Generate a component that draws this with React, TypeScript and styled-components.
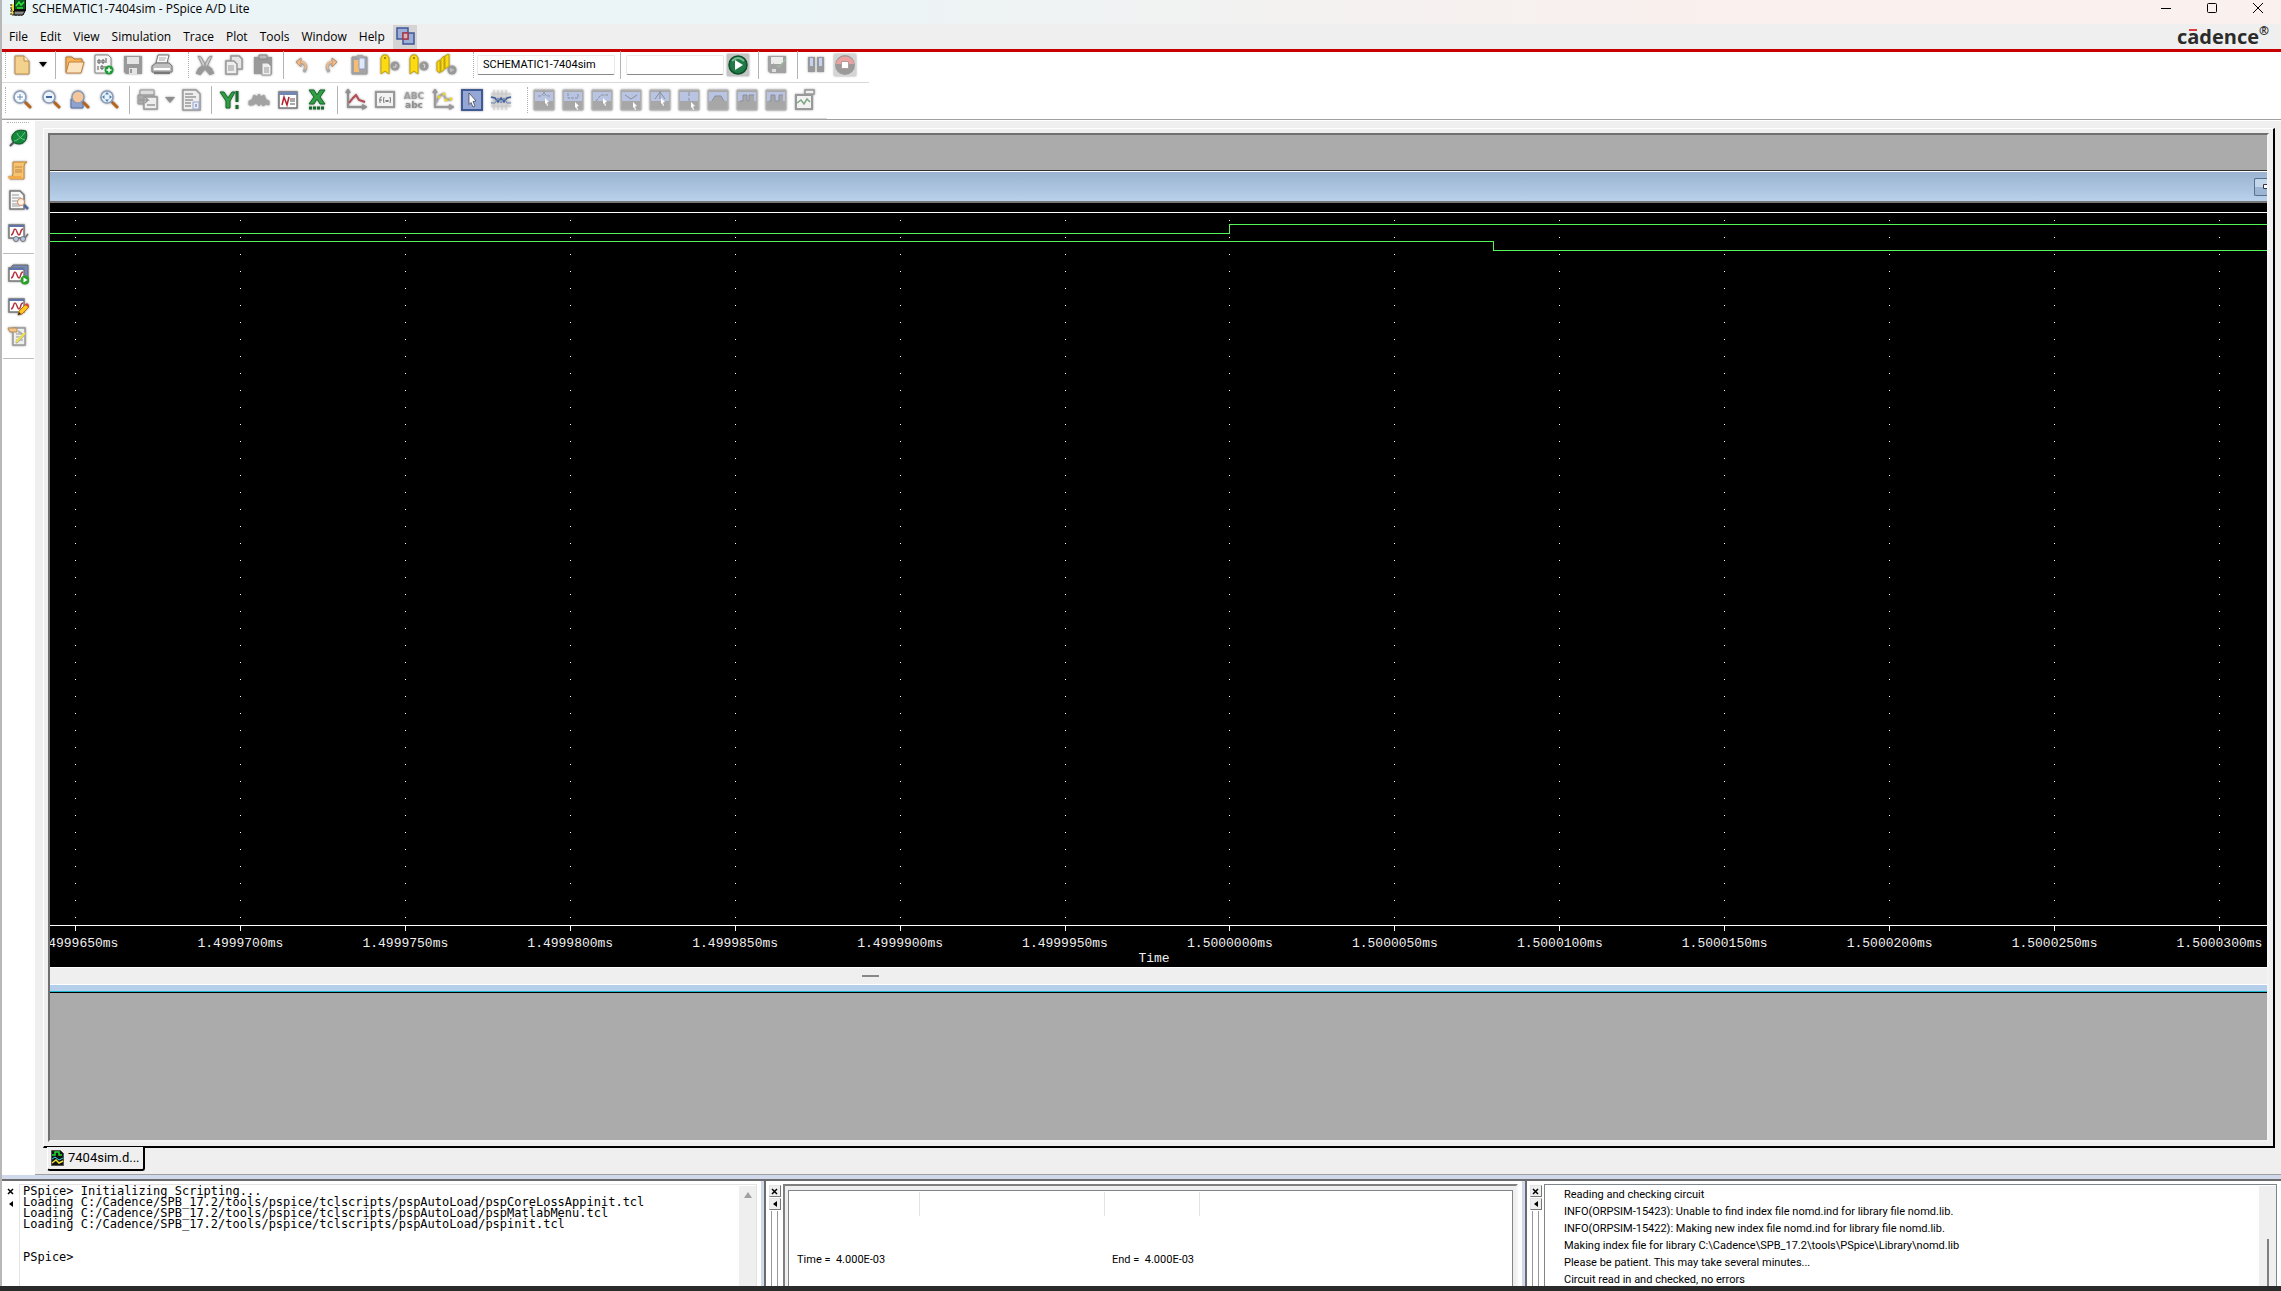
import React from 'react';
import styled, { createGlobalStyle, css } from 'styled-components';

const UI = '"Open Sans", "Noto Sans", sans-serif';
const SMALL = 'Roboto, "Liberation Sans", sans-serif';
const MONO = '"Liberation Mono", "Courier New", monospace';
const CONSOLE = '"DejaVu Sans Mono", monospace';

const Global = createGlobalStyle`
  * { box-sizing: border-box; }
  body { margin: 0; background: #fff; font-family: ${UI}; color: #000; }
  button { padding: 0; border: 0; background: none; color: inherit; font: inherit; }
`;

const Shell = styled.div`
  display: flex;
  flex-direction: column;
  height: 100vh;
  overflow: hidden;
`;
const Frame = styled.div`
  display: flex;
  flex-direction: column;
  flex: 1;
  min-height: 0;
  border-left: 2px solid #b8b8b8;
`;
const DesktopEdge = styled.div`
  height: 5px;
  background: #2b2b2b;
`;

const TitleBar = styled.header`
  display: flex;
  align-items: flex-start;
  height: 24px;
  padding-left: 8px;
  background: linear-gradient(90deg, #ebf4f6 0%, #ebf4f6 35%, #faf0ed 75%);
`;
const Title = styled.h1`
  flex: 1;
  margin: 0 0 0 5px;
  font-size: 12px;
  line-height: 17px;
  font-weight: 400;
`;
const WindowButtons = styled.div`
  display: flex;
  button { width: 46px; height: 16px; display: flex; justify-content: center; }
`;

const MenuBar = styled.nav`
  display: flex;
  align-items: center;
  gap: 12px;
  height: 28px;
  padding: 0 12px 0 7px;
  background: #efefef;
  border-bottom: 3px solid #c80000;
  font-size: 12px;
  line-height: 22px;
`;
const WindowIcon = styled.button`
  width: 24px;
  height: 24px;
  margin-left: -4px;
  background: #d4d4d4;
`;
const Logo = styled.div`
  display: flex;
  align-items: flex-start;
  margin-left: auto;
  color: #2b2b2b;
  font-size: 20px;
  font-weight: 700;
`;
const Accent = styled.span`
  position: relative;
  &::after {
    content: '';
    position: absolute;
    left: 2px;
    top: 6px;
    width: 8px;
    height: 2px;
    background: #e03a40;
  }
`;
const Registered = styled.span`
  font-size: 12px;
  line-height: 10px;
`;

const Toolbars = styled.div`
  background: #fff;
  border-bottom: 1px solid #a0a0a0;
`;
const Toolbar = styled.div<{ $width: number; $height: number; $lift?: number }>`
  display: flex;
  align-items: center;
  width: ${p => p.$width}px;
  height: ${p => p.$height}px;
  padding-bottom: ${p => p.$lift ?? 0}px;
  border-bottom: 1px solid #d8d8d8;
`;
const Grip = styled.span<{ $width?: number }>`
  width: ${p => p.$width ?? 14}px;
  height: 26px;
  padding-right: 2px;
  display: flex;
  justify-content: flex-end;
  &::after { content: ''; border-right: 1px dotted #b0b0b0; }
`;
const Separator = styled.span<{ $width?: number }>`
  display: flex;
  justify-content: center;
  width: ${p => p.$width ?? 10}px;
  height: 28px;
  &::after { content: ''; border-right: 1px solid #b4b4b4; }
`;
const Tool = styled.button<{ $width?: number }>`
  display: flex;
  align-items: center;
  justify-content: center;
  width: ${p => p.$width ?? 29}px;
  height: 31px;
  padding-right: 1px;
  svg { filter: drop-shadow(0 0 1px #999); }
`;
const ToolInput = styled.input<{ $width: number }>`
  width: ${p => p.$width}px;
  height: 20px;
  margin: 0 0 0 1px;
  padding: 0 5px;
  border: 1px solid #e8e8e8;
  border-bottom-color: #888;
  border-radius: 2px;
  background: #fff;
  font: 11px/18px ${SMALL};
  color: #000;
`;

const Workspace = styled.main`
  display: flex;
  flex: 1;
  min-height: 0;
`;
const SideBar = styled.aside`
  display: flex;
  flex-direction: column;
  align-items: center;
  width: 33px;
  padding: 2px 1px 0 0;
  background: #fff;
  &::before { content: ''; width: 22px; border-top: 1px dotted #b0b0b0; }
`;
const SideRule = styled.span`
  display: flex;
  align-items: center;
  width: 31px;
  height: 12px;
  &::after { content: ''; flex: 1; border-top: 1px solid #bcbcbc; }
`;
const Deck = styled.section`
  display: flex;
  flex-direction: column;
  flex: 1;
  min-width: 0;
  padding: 7px 6px 0 8px;
  background: #efefef;
  border-top: 1px solid #fff;
  border-bottom: 1px solid #a0a0a0;
`;
const DeckFrame = styled.div`
  display: flex;
  flex: 1;
  min-height: 0;
  padding: 4px;
  border: 1px solid #fff;
  border-right: 2px solid #000;
  border-bottom: 2px solid #000;
`;
const Mdi = styled.div`
  display: flex;
  flex-direction: column;
  flex: 1;
  min-width: 0;
  background: #ababab;
  border: 2px solid #707070;
  border-right-color: #f4f4f4;
  border-bottom-color: #f4f4f4;
`;
const MdiTop = styled.div`
  height: 36px;
  border-bottom: 1px solid #303030;
`;
const PlotTitle = styled.div`
  display: flex;
  align-items: center;
  justify-content: flex-end;
  height: 32px;
  background: linear-gradient(#9ab3d0, #b9d1ea);
  border-top: 1px solid #fff;
  border-bottom: 2px solid #777;
`;
const Restore = styled.button`
  display: flex;
  align-items: center;
  justify-content: flex-end;
  width: 13px;
  height: 18px;
  background: linear-gradient(#c3d6ea 50%, #9bb5d3 50%);
  border: 1px solid #56708f;
  border-right: 0;
  border-radius: 2px 0 0 2px;
`;
const Plot = styled.figure`
  display: flex;
  flex-direction: column;
  flex: 1;
  min-height: 0;
  margin: 0;
  background: #000;
`;
const PlotArea = styled.svg`
  display: block;
  flex: 1;
  width: 100%;
  min-height: 0;
`;
const Axis = styled.svg`
  display: block;
  width: 100%;
  height: 42px;
  fill: #f0f0f0;
  font: 13px ${MONO};
`;
const PlotScroll = styled.div`
  height: 18px;
  padding: 7px 0 0 812px;
  background: #efefef;
  border-top: 1px solid #fff;
  border-bottom: 1px solid #fff;
  &::after { content: ''; display: block; width: 17px; height: 2px; background: #888; }
`;
const PlotBottom = styled.div`
  height: 8px;
  background: #b5cfea;
  border-bottom: 1px solid #000;
  box-shadow: inset 0 -1px #20b8d0;
`;
const MdiRest = styled.div`
  height: 147px;
`;

const TabStrip = styled.div`
  display: flex;
  height: 26px;
  padding-left: 4px;
`;
const Tab = styled.button`
  display: flex;
  align-items: center;
  gap: 4px;
  height: 24px;
  margin-top: -1px;
  padding: 0 3px;
  background: #efefef;
  border-left: 1px solid #fff;
  border-right: 2px solid #000;
  border-bottom: 2px solid #000;
  border-radius: 0 0 3px 3px;
  font: 13px/20px ${SMALL};
`;

const Docks = styled.div`
  display: grid;
  grid-template-columns: 764fr 761fr 754fr;
  height: 111px;
  border-top: 4px solid #d0d8eb;
`;
const Dock = styled.section<{ $split?: boolean }>`
  display: flex;
  min-width: 0;
  overflow: hidden;
  padding-top: 3px;
  background: #fff;
  border-top: 2px solid #6b6b6b;
  ${p => p.$split && css`
    border-right: 2px solid #6b6b6b;
    box-shadow: inset -3px 0 #d0d8eb;
    padding-right: 7px;
  `}
`;
const DockHandle = styled.div<{ $raised?: boolean }>`
  display: flex;
  flex-direction: column;
  align-items: center;
  gap: 1px;
  width: 17px;
  padding-top: 1px;
  button {
    display: flex;
    align-items: center;
    justify-content: center;
    width: 12px;
    height: 12px;
    ${p => p.$raised && css`
      background: #efefef;
      border: 1px solid #e4e4e4;
      border-right-color: #777;
      border-bottom-color: #777;
    `}
  }
  &::after {
    content: '';
    flex: 1;
    width: 5px;
    ${p => p.$raised && css`
      border-left: 1px solid #999;
      border-right: 1px solid #999;
    `}
  }
`;
const ConsoleBox = styled.div`
  display: flex;
  flex: 1;
  min-width: 0;
  border: 1px solid #e3e3e3;
  border-bottom: 0;
`;
const ConsoleText = styled.pre`
  flex: 1;
  margin: 0;
  padding: 1px 0 0 3px;
  font: 12px/11px ${CONSOLE};
`;
const ScrollTrack = styled.div`
  width: 17px;
  margin-top: 1px;
  padding-top: 6px;
  display: flex;
  justify-content: center;
  background: #efefef;
`;
const ScrollThumb = styled.span`
  width: 2px;
  margin: 47px 0 0;
  background: #808080;
`;
const StatusFrame = styled.div`
  display: flex;
  flex: 1;
  padding: 4px 3px 0;
  background: #efefef;
  border: 2px solid #808080;
  border-right-color: #f4f4f4;
  border-bottom: 0;
`;
const StatusBox = styled.div`
  display: flex;
  flex-direction: column;
  justify-content: space-between;
  flex: 1;
  padding-bottom: 18px;
  background: #fff;
  border: 1px solid #7f858d;
  border-bottom: 0;
`;
const StatusHead = styled.div`
  display: grid;
  grid-template-columns: 131px 185px 95px;
  height: 25px;
  padding-top: 1px;
  span { border-right: 1px solid #e3e3e3; }
`;
const StatusValues = styled.div`
  display: grid;
  grid-template-columns: 315px 1fr;
  padding-left: 8px;
  font: 11px/17px ${SMALL};
  white-space: pre;
`;
const LogBox = styled.div`
  display: flex;
  flex: 1;
  min-width: 0;
  margin-right: 4px;
  border: 1px solid #7f858d;
  border-bottom: 0;
`;
const Log = styled.div`
  flex: 1;
  padding: 1px 0 0 19px;
  font: 11px/17px ${SMALL};
`;

/* ---------- icons ---------- */

const Svg = ({ children, size = 22 }: { children: React.ReactNode; size?: number }) => (
  <svg width={size} height={size} viewBox="0 0 22 22" fill="none" aria-hidden="true">{children}</svg>
);
const G = '#999';

const Magnifier = ({ kind }: { kind: 'in' | 'out' | 'area' | 'fit' }) => (
  <Svg>
    {kind === 'area' && <path d="M2 10h12v9H2z" fill="#8da2ce" stroke="#5870a5" />}
    <path d="M13 12l3 3" stroke="#5a74a8" strokeWidth="2" />
    <path d="M15 14l4 4" stroke="#b5651d" strokeWidth="3" strokeLinecap="round" />
    <circle cx="9" cy="8" r="6" fill={kind === 'area' ? '#f4c69a' : '#e9f3fb'} stroke="#8b9db8" strokeWidth="1.500" />
    {kind === 'in' && <path d="M9 4v8M5 8h8" stroke="#fff" strokeWidth="3" />}
    {kind === 'in' && <path d="M9 5v6M6 8h6" stroke="#6a86b0" strokeWidth="1" />}
    {kind === 'out' && <path d="M6 8h6" stroke="#46699e" strokeWidth="2" />}
    {kind === 'fit' && <path d="M9 3l2 2.500H7zM9 13l2-2.500H7zM4 8l2.500-2v4zM14 8l-2.500-2v4z" fill="#4f7fae" />}
  </Svg>
);

const Marker = ({ kind }: { kind: number }) => (
  <Svg>
    {kind < 2 ? (
      <>
        <path d="M3 4l2-3h4l2 3v16l-4-3-4 3z" fill="#fddb13" stroke="#c3a300" />
        <circle cx="7" cy="4" r="1" fill="#856f00" />
        <circle cx="17" cy="12" r="4.500" fill={G} />
        <path d={kind ? 'M16 10l2 1-1 3' : 'M15 13h3v-3'} stroke="#ddd" />
      </>
    ) : (
      <>
        <path d="M1 8l3-2v13l-3-2zM5 5l3-3v14l-3 2zM9 2l4-2v12l-4 3z" fill="#fddb13" stroke="#c3a300" />
        <circle cx="16" cy="16" r="4.500" fill={G} />
        <path d="M14 16h4M15 14v4" stroke="#ccc" />
      </>
    )}
  </Svg>
);

const probe = [
  'M5 7h3l3-3 3 3h3M11 2v5', 'M6 4v5h10V4', 'M5 12l5-6h7', 'M5 6l6 4 6-4', 'M6 10l5-7 5 7M11 2v8',
  'M11 3v4M11 9v3', 'M5 12l3-5h6l3 5', 'M4 12h3V6h4v6h2V6h5', 'M4 12h2V6h4v6h4V6h4',
];
const Probe = ({ index }: { index: number }) => (
  <Svg>
    <path d="M1 1h20v20H1z" fill="#a7a7a7" stroke="#b5b5b5" />
    <path d="M2 3h18v9H2z" fill="#b9c4e3" />
    {index > 5 && <path d={`${probe[index]}V13H4z`} fill="#a7a7a7" />}
    <path d={probe[index]} stroke="#8b8f99" strokeDasharray={index < 3 ? '3 1' : undefined} />
    {index < 6 && <path d={index % 2 ? 'M13 13l4 4-2 .5 1 3-1 .5-1-3-1 1z' : 'M12 9l4 4-2 .5 1 3-1 .5-1-3-1 1z'} fill="#fff" />}
  </Svg>
);

const WaveWindow = ({ kind }: { kind: 'glasses' | 'play' | 'pencil' }) => (
  <Svg>
    {kind === 'play' && <path d="M2 6l4-5h15v12l-4 4V6z" fill="#7489bd" stroke="#666" />}
    <path d="M2 4h15v13H2z" fill="#fff" stroke="#777" strokeWidth="1.500" />
    <path d="M2 4h15v2H2z" fill="#6076aa" />
    <path d="M4 14c3 0 2-6 4-6s2 6 4 6 1-6 4-6" stroke="#b83440" strokeWidth="1.500" />
    {kind === 'glasses' && (
      <>
        <path d="M8 17h10l3-4" stroke="#777" strokeWidth="1.500" />
        <circle cx="9" cy="18" r="2.500" fill="#b6c6ea" stroke="#777" />
        <circle cx="16" cy="18" r="2.500" fill="#b6c6ea" stroke="#777" />
      </>
    )}
    {kind === 'play' && (
      <>
        <circle cx="18" cy="16" r="4.500" fill="#28a028" />
        <path d="M16.500 13.500v5l4-2.500z" fill="#fff" />
      </>
    )}
    {kind === 'pencil' && (
      <>
        <path d="M11 20l1-4 7-7 3 3-7 7z" fill="#ffc61a" stroke="#b76a1c" />
        <path d="M18 10l2-2 2 2-1 2z" fill="#d84838" />
        <path d="M11 20l1-3 2 2z" fill="#222" />
      </>
    )}
  </Svg>
);

const AppIcon = () => (
  <svg width="17" height="17" viewBox="0 0 17 17" fill="none" aria-hidden="true">
    <path d="M1 4h10v11H1z" fill="#e9dc3c" />
    <path d="M1 4v12M2 15h10M1 9l4 4" stroke="#222" strokeDasharray="2 1" />
    <path d="M4 0h12v11H4z" fill="#111" />
    <path d="M5 0h10v9H5z" fill="#0a5a20" />
    <path d="M6 6l3-4 2 3 3-3M7 8h6" stroke="#2de83a" strokeWidth="1.500" />
    <path d="M4 11h11l-2 4H4z" fill="#888" stroke="#000" />
  </svg>
);
const FileIcon = () => (
  <svg width="13" height="16" viewBox="0 0 13 16" fill="none" aria-hidden="true">
    <path d="M.5.500h9l3 3v12H.500z" fill="#111" stroke="#555" />
    <path d="M1 5h3V2h4v3h3" stroke="#20e030" strokeWidth="1.500" />
    <path d="M1 9l3-2 4 3 4-2" stroke="#30d8e8" />
    <path d="M1 13l4-3 3 3 4-2" stroke="#f0e030" strokeWidth="1.500" />
  </svg>
);

const icons: Record<string, React.ReactNode> = {
  caret: <svg width="10" height="6" viewBox="0 0 10 6"><path d="M1 0h8L5 5z" fill="#000" /></svg>,
  caretGray: <svg width="10" height="6" viewBox="0 0 10 6"><path d="M0 0h10L5 6z" fill="#8e8e8e" /></svg>,
  new: <Svg><path d="M4 2h9l5 5v13H4z" fill="#f3d28d" stroke="#b98a4d" /><path d="M13 2v5h5" fill="#fff0cc" stroke="#b98a4d" /></Svg>,
  open: <Svg><path d="M2 18V3h6l2 2h8v4" fill="#f5b45c" stroke="#b9762f" /><path d="M2 19L5 8h15l-3 11z" fill="#fce3bf" stroke="#c4803a" /></Svg>,
  add: <Svg><path d="M2 1h13l3 3v15H2z" fill="#f4f4f4" stroke="#888" /><path d="M5 6h2v3H5zM9 6h2v3H9zM13 4v5M5 12v4M8 12h2v3H8zM12 12v2" stroke="#555" /><circle cx="16" cy="16" r="4.500" fill="#1f9b36" /><path d="M16 13.500v5M13.500 16h5" stroke="#fff" strokeWidth="1.500" /></Svg>,
  save: <Svg><path d="M2 2h18v18H4l-2-2z" fill={G} /><path d="M5 3h12v7H5zM7 14h8v6H7z" fill="#e4e4e4" /><path d="M8 15h2v4H8z" fill={G} /></Svg>,
  print: <Svg><path d="M5 9L7 1h11l-2 8z" fill="#f8f8f8" stroke="#777" /><path d="M1 12l4-3h13l3 3v6H1z" fill="#bfbfbf" stroke="#777" /><path d="M3 14h16v2H3z" fill="#fff" /><path d="M3 19h16" stroke="#777" strokeWidth="2" /><path d="M8 4h7M8 6h6" stroke="#aaa" /></Svg>,
  cut: <Svg><path d="M4 2l3 1 5 9-2 3zM18 2l-3 1-5 9 2 3z" fill="#ccc" stroke={G} /><path d="M9 12l-4 3-2 4 3 1 5-6M13 12l4 3 2 4-3 1-5-6" stroke={G} strokeWidth="2" fill={G} /></Svg>,
  copy: <Svg><path d="M8 2h8l3 3v10H8z" fill="#e6e6e6" stroke={G} strokeWidth="1.500" /><path d="M3 7h8l3 3v10H3z" fill="#eee" stroke={G} strokeWidth="1.500" /><path d="M5 12h6M5 14h6M5 16h6" stroke={G} /></Svg>,
  paste: <Svg><path d="M2 3h18v17H2z" fill={G} /><path d="M7 1h8v4H7z" fill="#bbb" stroke="#888" /><path d="M10 9h6l3 3v9h-9z" fill="#eee" stroke={G} /><path d="M12 14h5M12 16h5M12 18h5" stroke={G} /></Svg>,
  undo: <Svg><path d="M11 9c4 1 5 4 2 9" stroke="#aaa" strokeWidth="3" /><path d="M10 4v9L5 8z" fill="#f1b888" stroke="#b79472" /><path d="M10 8c4 0 6 3 4 7" stroke="#f1b888" strokeWidth="2" /></Svg>,
  redo: <Svg><path d="M11 9c-4 1-5 4-2 9" stroke="#aaa" strokeWidth="3" /><path d="M12 4v9l5-5z" fill="#f1b888" stroke="#b79472" /><path d="M12 8c-4 0-6 3-4 7" stroke="#f1b888" strokeWidth="2" /></Svg>,
  clip: <Svg><path d="M3 3h15v17H3z" fill="#a4a4a4" stroke="#999" /><path d="M5 6h5v12H5z" fill="#f6bd72" /><path d="M10 4h6v11h-6z" fill="#dfe8fb" stroke="#8f9cc1" /><path d="M8 1h6v3H8z" fill="#aaa" /></Svg>,
  run: <Svg><path d="M0 0h22v22H0z" fill="#c4c4c4" /><circle cx="11" cy="11" r="9" fill="#1f7a45" stroke="#0c4f28" strokeWidth="1.500" /><path d="M5 7q6-6 12 0" stroke="#79b892" strokeWidth="2" /><path d="M8 6v10l8-5z" fill="#fff" /></Svg>,
  check: <Svg><path d="M2 2h18v17H4l-2-2z" fill="#a2a2a2" /><path d="M5 3h12v7H5z" fill="#ececec" /><path d="M7 9l5 4 8-8v4l-8 8-5-4z" fill="#a2a2a2" /><path d="M11 12l2 1 7-8" stroke="#9bcf9f" /><path d="M6 15h4v3H6z" fill="#ddd" /></Svg>,
  pause: <Svg><path d="M3 3h7v15H3zM12 3h7v15h-7z" fill="#999" /><path d="M5 4h3v8H5zM14 4h3v8h-3z" fill="#c3d2f4" /></Svg>,
  stop: <Svg><path d="M0 0h22v22H0z" fill="#d4d4d4" /><circle cx="11" cy="11" r="10" fill="#9a9a9a" /><path d="M2 10C3 0 19 0 20 10z" fill="#e9a1a1" /><path d="M7.500 7.500h7v7h-7z" fill="#fff" stroke="#b99" /></Svg>,
  printAll: <Svg><path d="M3 1h14v5H3z" fill="#ddd" stroke={G} /><path d="M1 6h16v9H1z" fill="#aaa" stroke={G} /><path d="M7 8h13v12H7z" fill="#eee" stroke={G} strokeWidth="1.500" /><path d="M2 11h9l-3-3M11 11l-3 3M10 16h8" stroke={G} strokeWidth="1.500" /></Svg>,
  docLock: <Svg><path d="M3 1h13l4 4v16H3z" fill="#eee" stroke={G} strokeWidth="1.500" /><path d="M5 5h8M5 8h11M5 11h8M5 14h6M5 17h6" stroke={G} strokeWidth="1.500" /><path d="M13 13h6v7h-6z" fill="#e6ecff" stroke="#99a6cc" /><path d="M16 15v3" stroke="#667" /></Svg>,
  y: <Svg><path d="M1 3h4l4 6 4-6h3l-5 9v7H7v-7z" fill="#2f9e44" stroke="#146b28" /><path d="M18 2v11M18 16v4" stroke="#146b28" strokeWidth="3" /></Svg>,
  fft: <Svg><path d="M1 16v-4l3-1 2-5 3 2 2-3 2 3 3-2 2 5 3 1v4l-3-1-3 2-2-3-2 3-3-3-3 2z" fill="#a2a2a2" stroke="#a2a2a2" /></Svg>,
  n: <Svg><path d="M2 3h18v16H2z" fill="#fff" stroke="#777" strokeWidth="1.500" /><path d="M2 3h18v3H2z" fill="#7387b5" /><path d="M5 16l2-8 3 8 2-8" stroke="#b3202c" strokeWidth="1.500" /><path d="M13 10h5M13 12h5M13 15h5" stroke="#555" /></Svg>,
  x: <Svg><path d="M3 1h5l3 5 3-5h5l-5 7 5 7h-5l-3-5-3 5H3l5-7z" fill="#2f9e44" stroke="#146b28" /><path d="M3 19h16" stroke="#146b28" strokeWidth="3" strokeDasharray="3 1" /></Svg>,
  axis: <Svg><path d="M3 1v17h17M1 4l2-3 2 3M17 16l4 2-4 2" stroke="#909090" strokeWidth="2" /><path d="M4 14l4-5 3-3 3 5 6 2" stroke="#b64a52" strokeWidth="2" /></Svg>,
  fx: <Svg><path d="M2 3h18v15H2z" fill="#f2f2f2" stroke={G} strokeWidth="2" /><path d="M8 8H7q-1 0-1 2v4M5 11h3M10 8q-1 3 0 6M12 13v-2l1 2 1-2v2M16 8q1 3 0 6" stroke="#777" /></Svg>,
  abc: <Svg><text x="11" y="10" textAnchor="middle" fontFamily="DejaVu Sans" fontWeight="700" fontSize="9" fill="#a0a0a0">ABC</text><text x="11" y="19" textAnchor="middle" fontFamily="DejaVu Sans" fontWeight="700" fontSize="9" fill="#909090">abc</text></Svg>,
  points: <Svg><path d="M3 1v17h17M1 4l2-3 2 3M17 16l4 2-4 2" stroke="#999" strokeWidth="2" /><path d="M4 14l3-7 4-2 3 5 5 1" stroke="#aaa" strokeWidth="2" /><circle cx="7" cy="8" r="1.500" fill="#efd51a" /><circle cx="12" cy="5" r="1.500" fill="#efd51a" /><circle cx="14" cy="11" r="1.500" fill="#efd51a" /><circle cx="19" cy="10" r="1.500" fill="#efd51a" /></Svg>,
  cursor: <Svg><path d="M1 1h20v20H1z" fill="#94a7d5" stroke="#3f5a96" strokeWidth="2" /><path d="M8 4l7 8-3 .5 2 4.500-2 1-2-4.500-2 2z" fill="#fff" stroke="#334" strokeWidth=".7" /></Svg>,
  grid: <Svg><path d="M4 1v20M8 1v20M12 1v20M16 1v20M1 5h20M1 9h20M1 13h20M1 17h20" stroke="#ccc" /><path d="M1 8l4 1 3 4 3-4 3 4 3-4 4-1" stroke="#3d5f9b" strokeWidth="1.500" /><path d="M1 14h4l3-5 3 5 3-5 3 5h4" stroke="#6d86b5" /></Svg>,
  chart: <Svg><path d="M11 1h9v4h-9z" fill="#eee" stroke={G} strokeWidth="1.500" /><path d="M2 6h16v14H2z" fill="#f2f2f2" stroke={G} strokeWidth="2" /><path d="M3 14l4-3 3 4 3-5 3 3" stroke="#7ca582" strokeWidth="1.500" /></Svg>,
  leaf: <Svg><path d="M3 18l4-4" stroke="#556" strokeWidth="2" /><path d="M5 8C8 1 15 2 19 3c2 6 0 13-7 13-5 0-8-3-7-8z" fill="#15893a" stroke="#0a5322" /><path d="M7 13C11 12 15 9 18 4M10 5c1 3 4 6 8 7" stroke="#68c487" /></Svg>,
  scroll: <Svg><path d="M6 3h14q-3 1-3 4v13H3q3-2 3-5z" fill="#f7c36c" stroke="#c1873a" /><path d="M1 17h13l2 3H2z" fill="#f2a94c" /><path d="M8 8h7M8 11h7M8 13h7" stroke="#b98a51" /></Svg>,
  find: <Svg><path d="M3 1h10l4 4v14H3z" fill="#f7f7f7" stroke="#777" strokeWidth="1.500" /><path d="M5 5h7M5 8h9M5 11h6M5 14h7M5 16h8" stroke="#999" /><circle cx="14" cy="12" r="3.500" fill="#fff3e5" stroke="#cf8a5d" /><path d="M17 15l4 4" stroke="#4f68a0" strokeWidth="2.500" /></Svg>,
  glasses: <WaveWindow kind="glasses" />,
  play: <WaveWindow kind="play" />,
  pencil: <WaveWindow kind="pencil" />,
  note: <Svg><path d="M6 2h12v17H6z" fill="#eee" stroke={G} strokeWidth="1.500" /><path d="M9 8h7M9 11h6M9 14h7" stroke={G} /><path d="M1 2h9v4H3z" fill="#f1c58a" stroke="#b58d57" /><path d="M11 5l4 3M9 17l9-9" stroke="#aaa" strokeWidth="2" /><path d="M9 16l9-9" stroke="#f0e442" strokeWidth="2" /></Svg>,
};

const ToolButton = ({ icon, label, width }: { icon: React.ReactNode; label: string; width?: number }) => (
  <Tool type="button" aria-label={label} title={label} $width={width}>{icon}</Tool>
);
const Tools = ({ items }: { items: [string, string][] }) => (
  <>{items.map(([key, label]) => <ToolButton key={label} icon={icons[key]} label={label} />)}</>
);

/* ---------- plot ---------- */

const FIRST_TICK = 1499965;
const xAt = (t: number) => `${1.15 + ((t - FIRST_TICK) / 5) * 7.439}%`;
const ticks = Array.from({ length: 14 }, (_, i) => FIRST_TICK + i * 5);
const signals = [
  { at: 1500000, before: 30.5, after: 21.5 },
  { at: 1500008, before: 38.5, after: 47.5 },
];

const Waveforms = () => (
  <Plot aria-label="Digital traces against time">
    <PlotArea shapeRendering="crispEdges">
      <line x1="0" x2="100%" y1="9.500" y2="9.500" stroke="#fff" />
      {ticks.map(t => (
        <line key={t} x1={xAt(t)} x2={xAt(t)} y1="17" y2="100%" stroke="#fff" strokeDasharray="1 16" />
      ))}
      {signals.map(s => (
        <g key={s.at} stroke="#56f556">
          <line x1="0" x2={xAt(s.at)} y1={s.before} y2={s.before} />
          <line x1={xAt(s.at)} x2={xAt(s.at)} y1={Math.min(s.before, s.after) - 0.5} y2={Math.max(s.before, s.after) + 0.5} />
          <line x1={xAt(s.at)} x2="100%" y1={s.after} y2={s.after} />
        </g>
      ))}
    </PlotArea>
    <Axis>
      <line x1="0" x2="100%" y1=".5" y2=".5" stroke="#fff" shapeRendering="crispEdges" />
      {ticks.map(t => (
        <g key={t}>
          <line x1={xAt(t)} x2={xAt(t)} y1="1" y2="6" stroke="#fff" shapeRendering="crispEdges" />
          <text x={xAt(t)} y="22" textAnchor="middle">{`${(t / 1e6).toFixed(6)}0ms`}</text>
        </g>
      ))}
      <text x="49.8%" y="37" textAnchor="middle">Time</text>
    </Axis>
  </Plot>
);

const Handle = ({ raised }: { raised?: boolean }) => (
  <DockHandle $raised={raised}>
    <button type="button" aria-label="Close panel">
      <svg width="7" height="7" viewBox="0 0 7 7"><path d="M1 1l5 5M6 1L1 6" stroke="#000" strokeWidth="1.500" /></svg>
    </button>
    <button type="button" aria-label="Collapse panel">
      <svg width="4" height="6" viewBox="0 0 4 6"><path d="M4 0v6L0 3z" /></svg>
    </button>
  </DockHandle>
);

const menus = ['File', 'Edit', 'View', 'Simulation', 'Trace', 'Plot', 'Tools', 'Window', 'Help'];
const loadPath = 'Loading C:/Cadence/SPB_17.2/tools/pspice/tclscripts/pspAutoLoad/';
const consoleLines = [
  'PSpice> Initializing Scripting...',
  `${loadPath}pspCoreLossAppinit.tcl`,
  `${loadPath}pspMatlabMenu.tcl`,
  `${loadPath}pspinit.tcl`,
  '', '',
  'PSpice>',
];
const log = [
  'Reading and checking circuit',
  'INFO(ORPSIM-15423): Unable to find index file nomd.ind for library file nomd.lib.',
  'INFO(ORPSIM-15422): Making new index file nomd.ind for library file nomd.lib.',
  'Making index file for library C:\\Cadence\\SPB_17.2\\tools\\PSpice\\Library\\nomd.lib',
  'Please be patient. This may take several minutes...',
  'Circuit read in and checked, no errors',
];

export default function App() {
  return (
    <Shell>
      <Global />
      <Frame>
        <TitleBar>
          <AppIcon />
          <Title>SCHEMATIC1-7404sim - PSpice A/D Lite</Title>
          <WindowButtons>
            <button type="button" aria-label="Minimize"><svg width="12" height="16"><path d="M1 8.500h10" stroke="#000" /></svg></button>
            <button type="button" aria-label="Maximize"><svg width="12" height="16"><rect x="1.500" y="3.500" width="9" height="9" rx="1" fill="none" stroke="#000" /></svg></button>
            <button type="button" aria-label="Close"><svg width="12" height="16"><path d="M1 3l10 10M11 3L1 13" stroke="#000" /></svg></button>
          </WindowButtons>
        </TitleBar>
        <MenuBar>
          {menus.map(m => <button type="button" key={m}>{m}</button>)}
          <WindowIcon type="button" aria-label="Switch window">
            <Svg><path d="M3 3h11v11H3zM9 8h11v11H9z" fill="#9dafd9" stroke="#3e5795" strokeWidth="1.500" /><path d="M9 8h5v6H9z" fill="#d5b3bd" stroke="#b23945" strokeWidth="1.500" /></Svg>
          </WindowIcon>
          <Logo><span>c<Accent>a</Accent>dence</span><Registered>®</Registered></Logo>
        </MenuBar>

        <Toolbars>
          <Toolbar $width={867} $height={31} $lift={5}>
            <Grip $width={6} />
            <Tools items={[['new', 'New']]} />
            <ToolButton icon={icons.caret} label="New options" width={12} />
            <Separator $width={12} />
            <Tools items={[['open', 'Open'], ['add', 'Append file'], ['save', 'Save'], ['print', 'Print']]} />
            <Grip />
            <Tools items={[['cut', 'Cut'], ['copy', 'Copy'], ['paste', 'Paste']]} />
            <Separator />
            <Tools items={[['undo', 'Undo'], ['redo', 'Redo'], ['clip', 'Bookmarks']]} />
            {['Toggle bookmark', 'Next bookmark', 'Clear bookmarks'].map((label, i) => (
              <ToolButton key={label} icon={<Marker kind={i} />} label={label} />
            ))}
            <Grip />
            <ToolInput $width={138} aria-label="Simulation profile" defaultValue="SCHEMATIC1-7404sim" />
            <Separator />
            <ToolInput $width={98} aria-label="Run to time" />
            <Tools items={[['run', 'Run']]} />
            <Separator />
            <Tools items={[['check', 'Save check point']]} />
            <Separator />
            <Tools items={[['pause', 'Pause'], ['stop', 'Stop']]} />
          </Toolbar>
          <Toolbar $width={825} $height={36} $lift={1}>
            <Grip $width={6} />
            {(['in', 'out', 'area', 'fit'] as const).map(k => (
              <ToolButton key={k} icon={<Magnifier kind={k} />} label={`Zoom ${k}`} />
            ))}
            <Separator />
            <Tools items={[['printAll', 'Output']]} />
            <ToolButton icon={icons.caretGray} label="Output options" width={14} />
            <Tools items={[['docLock', 'Locked file']]} />
            <Separator />
            <Tools items={[['y', 'Log Y'], ['fft', 'Fourier'], ['n', 'Performance'], ['x', 'Log X']]} />
            <Separator />
            <Tools items={[['axis', 'Add trace'], ['fx', 'Evaluate'], ['abc', 'Label'], ['points', 'Mark points'], ['cursor', 'Toggle cursor'], ['grid', 'Grid']]} />
            <Grip />
            {probe.map((_, i) => <ToolButton key={i} icon={<Probe index={i} />} label={`Cursor mode ${i + 1}`} />)}
            <Tools items={[['chart', 'Mark label']]} />
          </Toolbar>
        </Toolbars>

        <Workspace>
          <SideBar>
            <Tools items={[['leaf', 'Simulation'], ['scroll', 'Netlist'], ['find', 'Output file'], ['glasses', 'View results']]} />
            <SideRule />
            <Tools items={[['play', 'Run queue'], ['pencil', 'Edit profile'], ['note', 'Messages']]} />
            <SideRule />
          </SideBar>
          <Deck>
            <DeckFrame>
              <Mdi>
                <MdiTop />
                <PlotTitle>
                  <Restore type="button" aria-label="Restore plot"><svg width="4" height="5"><path d="M4 .5H.500v4H4" fill="#fff" stroke="#334" /></svg></Restore>
                </PlotTitle>
                <Waveforms />
                <PlotScroll />
                <PlotBottom />
                <MdiRest />
              </Mdi>
            </DeckFrame>
            <TabStrip>
              <Tab type="button"><FileIcon />7404sim.d...</Tab>
            </TabStrip>
          </Deck>
        </Workspace>

        <Docks>
          <Dock $split>
            <Handle />
            <ConsoleBox>
              <ConsoleText>{consoleLines.join('\n')}</ConsoleText>
              <ScrollTrack><svg width="8" height="6" viewBox="0 0 8 6"><path d="M4 0l4 6H0z" fill="#a0a0a0" /></svg></ScrollTrack>
            </ConsoleBox>
          </Dock>
          <Dock $split>
            <Handle raised />
            <StatusFrame>
              <StatusBox>
                <StatusHead><span /><span /><span /></StatusHead>
                <StatusValues><span>{'Time =  4.000E-03'}</span><span>{'End =  4.000E-03'}</span></StatusValues>
              </StatusBox>
            </StatusFrame>
          </Dock>
          <Dock>
            <Handle raised />
            <LogBox>
              <Log>{log.map(l => <div key={l}>{l}</div>)}</Log>
              <ScrollTrack><ScrollThumb /></ScrollTrack>
            </LogBox>
          </Dock>
        </Docks>
      </Frame>
      <DesktopEdge />
    </Shell>
  );
}
